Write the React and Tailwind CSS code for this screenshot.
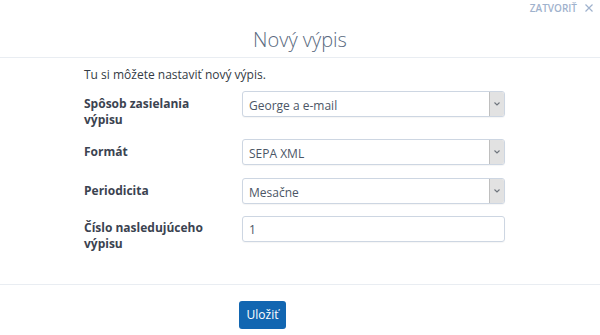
import React, { useState } from 'react';

const FIELDS = [
  { id: 'sposob', label: ['Spôsob zasielania', 'výpisu'], type: 'select', options: ['George a e-mail', 'George', 'Pošta'] },
  { id: 'format', label: ['Formát'], type: 'select', options: ['SEPA XML', 'PDF', 'CSV'] },
  { id: 'periodicita', label: ['Periodicita'], type: 'select', options: ['Mesačne', 'Týždenne', 'Denne'] },
  { id: 'cislo', label: ['Číslo nasledujúceho', 'výpisu'], type: 'input' },
];

function Chevron() {
  return (
    <svg width="8" height="6" viewBox="0 0 8 6" fill="none">
      <path d="M1.5 1.5 L4 4 L6.5 1.5" stroke="#6f757d" strokeWidth="1.1" />
    </svg>
  );
}

function CloseIcon() {
  return (
    <svg width="8" height="8" viewBox="0 0 8 8" fill="none">
      <path d="M0.5 0.5 L7.5 7.5 M7.5 0.5 L0.5 7.5" stroke="#9fb2cd" strokeWidth="1.2" />
    </svg>
  );
}

function SelectBox({ value, options, onChange }) {
  return (
    <div className="relative w-[263px] h-[26px] rounded-[3px] border border-[#cdd6e2] bg-white shadow-[0_1px_1px_rgba(0,0,0,0.04)]">
      <select
        value={value}
        onChange={(e) => onChange(e.target.value)}
        className="appearance-none w-full h-full bg-transparent pl-[6px] pr-[20px] text-[12px] text-[#4b5666] outline-none"
      >
        {options.map((o) => (
          <option key={o}>{o}</option>
        ))}
      </select>
      <div className="pointer-events-none absolute right-0 top-0 bottom-0 w-[15px] flex items-center justify-center bg-[#e2e2e2] border-l border-[#bfbfbf] rounded-r-[2px]">
        <Chevron />
      </div>
    </div>
  );
}

export default function App() {
  const [values, setValues] = useState({
    sposob: 'George a e-mail',
    format: 'SEPA XML',
    periodicita: 'Mesačne',
    cislo: '1',
  });

  const rowMargins = ['mt-[8px]', 'mt-[11px]', 'mt-[13px]', 'mt-[12px]'];
  const labelPads = ['pt-[5px]', 'pt-[5px]', 'pt-[5px]', 'pt-[4px]'];

  return (
    <div className="w-[600px] h-[335px] bg-white font-['Open_Sans',sans-serif] overflow-hidden">
      {/* header */}
      <div className="border-b border-[#e9edf2]">
        <div className="h-4 flex justify-end items-center pr-[7px]">
          <button className="flex items-center gap-[8px] text-[10px] leading-[14px] font-semibold text-[#9fb2cd]">
            ZATVORIŤ
            <CloseIcon />
          </button>
        </div>
        <h1 className="mt-[10px] mb-[3px] text-center text-[20px] leading-[28px] font-light text-[#5a6a80]">
          Nový výpis
        </h1>
      </div>

      {/* body */}
      <div className="pl-[84px] pt-[9px] pb-[32px] border-b border-[#e9edf2]">
        <p className="text-[12px] leading-4 text-[#343b45]">Tu si môžete nastaviť nový výpis.</p>
        {FIELDS.map((f, i) => (
          <div key={f.id} className={`flex ${rowMargins[i]}`}>
            <label className={`w-[158px] ${labelPads[i]} text-[12px] leading-4 font-bold text-[#3b4350]`}>
              {f.label.map((l) => (
                <div key={l}>{l}</div>
              ))}
            </label>
            {f.type === 'select' ? (
              <SelectBox
                value={values[f.id]}
                options={f.options}
                onChange={(v) => setValues({ ...values, [f.id]: v })}
              />
            ) : (
              <input
                value={values[f.id]}
                onChange={(e) => setValues({ ...values, [f.id]: e.target.value })}
                className="w-[263px] h-[26px] rounded-[3px] border border-[#cdd6e2] pl-[6px] text-[12px] text-[#4b5666] outline-none shadow-[0_1px_1px_rgba(0,0,0,0.04)]"
              />
            )}
          </div>
        ))}
      </div>

      {/* footer */}
      <div className="pl-[239px] pt-[16px]">
        <button className="w-[47px] h-[28px] rounded-[3px] bg-[#1266b1] text-white text-[12px]">
          Uložiť
        </button>
      </div>
    </div>
  );
}
